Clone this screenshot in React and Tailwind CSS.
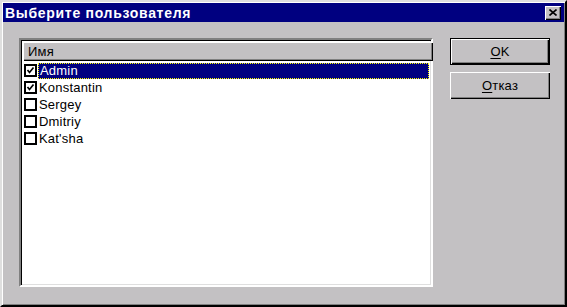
import React from 'react';

const font = { fontFamily: '"Liberation Sans", Arial, sans-serif' };

const users = [
  { name: 'Admin', checked: true, selected: true },
  { name: 'Konstantin', checked: true },
  { name: 'Sergey', checked: false },
  { name: 'Dmitriy', checked: false },
  { name: "Kat'sha", checked: false },
];

function CheckBox({ checked }) {
  return (
    <div className="w-[13px] h-[13px] border-2 border-black bg-white flex items-center justify-center shrink-0">
      {checked && (
        <svg width="9" height="9" viewBox="0 0 9 9">
          <path d="M1.5 4 L3.5 6.5 L7.5 1.5" stroke="black" strokeWidth="1.7" fill="none" />
        </svg>
      )}
    </div>
  );
}

function Button({ children, isDefault }) {
  return (
    <button
      type="button"
      className={
        'w-[100px] h-[27px] bg-[#c3c1c3] text-[13px] tracking-[0.2px] text-black flex items-center justify-center ' +
        (isDefault
          ? 'border border-black shadow-[inset_1px_1px_#fff,inset_-1px_-1px_#000,inset_-2px_-2px_#808080]'
          : 'shadow-[inset_1px_1px_#fff,inset_-1px_-1px_#000,inset_-2px_-2px_#808080]')
      }
      style={font}
    >
      {children}
    </button>
  );
}

export default function App() {
  return (
    <div
      className="w-[567px] h-[307px] bg-[#c3c1c3] border-2 border-t-[#dfdfdf] border-l-[#dfdfdf] border-r-black border-b-black shadow-[inset_1px_1px_#fff,inset_-1px_-1px_#808080] p-[1px] flex flex-col"
      style={font}
    >
      {/* Title bar */}
      <div className="h-[19px] bg-[#000080] flex items-center justify-between pl-[2px] pr-[3px]">
        <span className="text-white font-bold text-[14px] leading-none tracking-[0.7px]">Выберите пользователя</span>
        <div className="w-[16px] h-[14px] bg-[#c3c1c3] shadow-[inset_1px_1px_#fff,inset_-1px_-1px_#000,inset_-2px_-2px_#808080] flex items-center justify-center">
          <svg width="8" height="7" viewBox="0 0 8 7">
            <path d="M0.5 0.5 L7.5 6.5 M7.5 0.5 L0.5 6.5" stroke="black" strokeWidth="1.6" />
          </svg>
        </div>
      </div>

      {/* Body */}
      <div className="flex-1 flex pl-[16px] pt-[16px] pb-[17px] pr-[15px] gap-[17px]">
        {/* List view */}
        <div className="w-[414px] h-[249px] bg-white border-2 border-t-[#808080] border-l-[#808080] border-r-white border-b-white shadow-[inset_1px_1px_#000,inset_-1px_-1px_#dfdfdf] p-[1px] flex flex-col">
          <div className="h-[19px] w-[410px] ml-[1px] mt-[1px] bg-[#c3c1c3] shadow-[inset_1px_1px_#fff,inset_-1px_-1px_#000,inset_-2px_-2px_#808080] flex items-center pl-[5px] text-[13px] tracking-[0.2px] text-black">
            Имя
          </div>
          <div className="flex flex-col pt-[1px]">
            {users.map((u) => (
              <div key={u.name} className="h-[17px] flex items-center pl-[2px]">
                <CheckBox checked={u.checked} />
                <div
                  className={
                    'ml-[1px] h-[16px] flex items-center pl-[1px] text-[13px] tracking-[0.2px] ' +
                    (u.selected
                      ? 'flex-1 mr-[1px] bg-[#000080] text-white border border-dotted border-[#ffff00]'
                      : 'text-black')
                  }
                >
                  {u.name}
                </div>
              </div>
            ))}
          </div>
        </div>

        {/* Buttons */}
        <div className="flex flex-col gap-[7px]">
          <Button isDefault>
            <span><span className="underline underline-offset-2">O</span>K</span>
          </Button>
          <Button>
            <span><span className="underline underline-offset-2">О</span>тказ</span>
          </Button>
        </div>
      </div>
    </div>
  );
}
